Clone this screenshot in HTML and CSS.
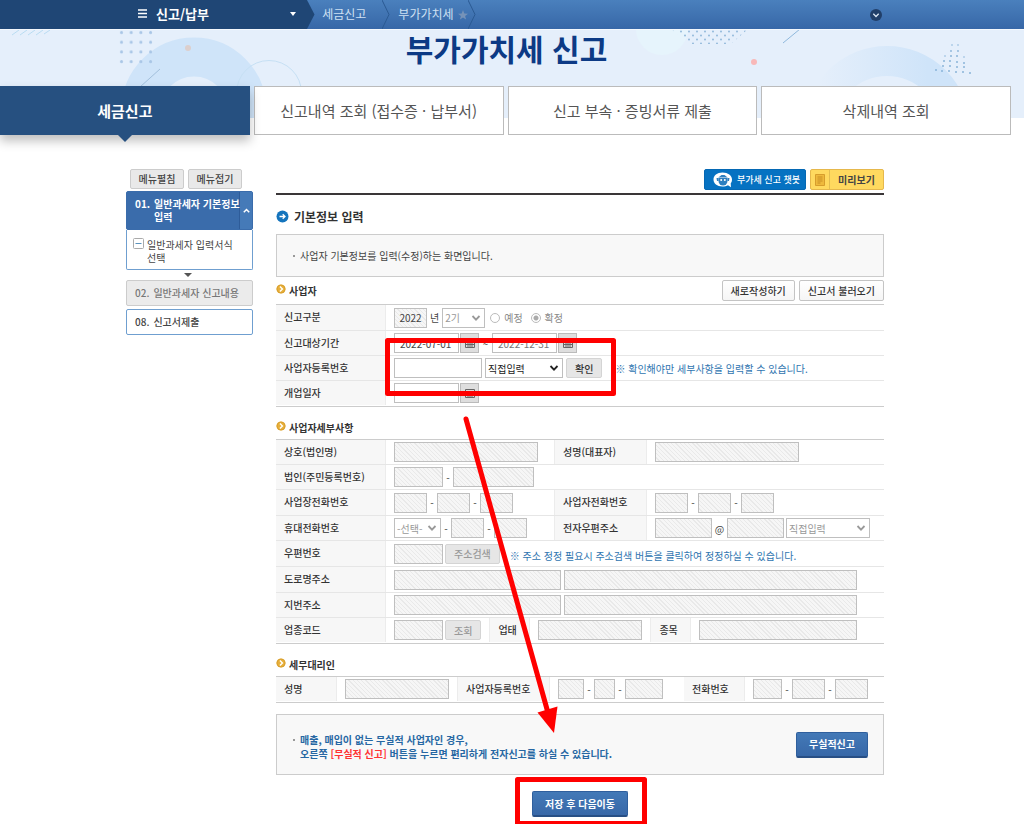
FILE: index.html
```html
<!DOCTYPE html>
<html lang="ko">
<head>
<meta charset="utf-8">
<title>부가가치세 신고</title>
<link rel="stylesheet" href="styles.css">
</head>
<body>
<svg class="defs" aria-hidden="true">
  <symbol id="chev" viewBox="0 0 10 10"><path d="M1.5 3l3.5 3.6L8.5 3" fill="none" stroke="currentColor" stroke-width="1.8"/></symbol>
  <symbol id="cal" viewBox="0 0 12 12"><path d="M1.5 2.5h9v8h-9zM1 4.5h10M4 5v5M6 5v5M8 5v5M2 7.5h8" fill="none" stroke="currentColor"/></symbol>
  <symbol id="gold" viewBox="0 0 10 10"><circle cx="5" cy="5" r="4.6" fill="#e8b03a"/><circle cx="5" cy="5" r="4" fill="none" stroke="#d39a2b" stroke-width=".7"/><path d="M3.9 2.6L6.4 5 3.9 7.4" fill="none" stroke="#fff" stroke-width="1.4"/></symbol>
</svg>
<header class="topbar">
  <button class="menu-main" type="button">
    <svg width="9" height="9" viewBox="0 0 9 9"><path d="M0 1h9M0 4.5h9M0 8h9" stroke="#fff" stroke-width="1.5"/></svg>
    <span>신고/납부</span>
    <svg class="caret" width="6" height="4" viewBox="0 0 6 4"><path d="M0 0h6L3 4z" fill="#fff"/></svg>
  </button>
  <svg class="tip" width="8" height="29" viewBox="0 0 8 29"><path d="M0 0L7.500 14.500 0 29z" fill="#1f4675"/></svg>
  <nav class="crumbs">
    <a href="#">세금신고</a>
    <svg width="8" height="29" viewBox="0 0 8 29"><path d="M0 0l7 14.500L0 29" fill="none" stroke="#2b5a93"/></svg>
    <a href="#">부가가치세</a>
    <svg class="star" width="10" height="10" viewBox="0 0 10 10"><path d="M5 0l1.300 3.500 3.700.200-2.900 2.300 1 3.600L5 7.600 1.900 9.600l1-3.600L0 3.700l3.700-.200z" fill="#7592b8"/></svg>
    <svg width="8" height="29" viewBox="0 0 8 29"><path d="M0 0l7 14.500L0 29" fill="none" stroke="#2b5a93"/></svg>
  </nav>
  <button class="expand" type="button" aria-label="펼치기"><svg width="12" height="12" viewBox="0 0 12 12"><circle cx="6" cy="6" r="6" fill="#213f69"/><path d="M3.300 4.800L6 7.500l2.700-2.700" fill="none" stroke="#dce8f5" stroke-width="1.300"/></svg></button>
</header>
<section class="hero">
  <svg class="hero-art" viewBox="0 29 1024 89" preserveAspectRatio="xMidYMin slice" aria-hidden="true">
    <defs>
      <linearGradient id="fade"><stop offset="0" stop-color="#cfe4f9" stop-opacity="0"/><stop offset=".8" stop-color="#cfe4f9"/></linearGradient>
      <pattern id="dots" x="117" y="27" width="9.700" height="9.700" patternUnits="userSpaceOnUse"><circle cx="4.500" cy="4.500" r="1.500" fill="#a9c6e6"/></pattern>
      <pattern id="tiny" x="671" y="28" width="8" height="8" patternUnits="userSpaceOnUse"><circle cx="2" cy="2.500" r=".9" fill="#8ab4d8"/><circle cx="6" cy="6.500" r=".9" fill="#8ab4d8"/></pattern>
    </defs>
    <path d="M12 34l7-5M20 34l7-5M28 34l7-5M36 34l7-5M44 33l6-4" stroke="#b9dcf2"/>
    <circle cx="194" cy="109" r="53" fill="none" stroke="#cfe4f9" stroke-width="39"/>
    <circle cx="269" cy="92" r="32.500" fill="none" stroke="#c6e0f4"/>
    <rect x="117" y="27" width="38" height="38" fill="url(#dots)"/>
    <circle cx="188" cy="47" r="3" fill="#dccfcd"/>
    <path d="M140 86l20-18" stroke="#a3c0dc"/>
    <circle cx="662" cy="28" r="26" fill="#e6f4fc"/>
    <path d="M671 28h77l-17 15h-40z" fill="url(#tiny)"/>
    <path d="M783 42l17-14" stroke="#8fb8dc"/>
    <circle cx="754" cy="61" r="3" fill="#f8b8b8"/>
    <circle cx="887" cy="128" r="68" fill="none" stroke="url(#fade)" stroke-width="30"/>
    <g fill="#8ab4d8"><circle cx="952" cy="44" r=".8"/><circle cx="958" cy="44" r=".8"/><circle cx="951" cy="50" r=".9"/><circle cx="958" cy="50" r=".9"/><circle cx="945" cy="55" r=".8"/><circle cx="951" cy="55" r="1"/><circle cx="957" cy="55" r="1"/><circle cx="964" cy="56" r=".8"/><circle cx="944" cy="60" r="1"/><circle cx="950" cy="60" r="1"/><circle cx="957" cy="61" r="1"/><circle cx="964" cy="62" r="1"/><circle cx="943" cy="65" r="1"/><circle cx="950" cy="65" r="1"/><circle cx="957" cy="66" r="1"/><circle cx="964" cy="66" r="1"/><circle cx="936" cy="69" r="1"/><circle cx="942" cy="70" r="1"/><circle cx="949" cy="70" r="1"/><circle cx="956" cy="71" r="1"/><circle cx="963" cy="71" r="1"/><circle cx="970" cy="72" r="1"/></g>
  </svg>
  <h1>부가가치세 신고</h1>
</section>
<nav class="tabs">
  <a class="tab active" href="#">세금신고</a>
  <a class="tab" href="#">신고내역 조회 (접수증 · 납부서)</a>
  <a class="tab" href="#">신고 부속 · 증빙서류 제출</a>
  <a class="tab" href="#">삭제내역 조회</a>
</nav>
<div class="page">
  <aside class="side">
    <div class="side-btns"><button type="button">메뉴펼침</button><button type="button">메뉴접기</button></div>
    <div class="step open">
      <a class="step-head" href="#"><span>01.</span><span class="step-name">일반과세자 기본정보 입력</span></a>
      <span class="step-arrow"><svg width="7" height="5" viewBox="0 0 7 5"><path d="M.8 4.300L3.500 1.500l2.700 2.800" fill="none" stroke="#fff" stroke-width="1.500"/></svg></span>
    </div>
    <a class="sub" href="#"><svg width="11" height="11" viewBox="0 0 11 11"><rect x=".5" y=".5" width="10" height="10" rx="1" fill="#fff" stroke="#aaa"/><path d="M2.500 5.500h6" stroke="#5b93bd"/></svg><span>일반과세자 입력서식 선택</span></a>
    <svg class="down" width="8" height="4" viewBox="0 0 8 4"><path d="M0 0h8L4 4z" fill="#555"/></svg>
    <a class="step plain gray" href="#"><span>02.</span><span>일반과세자 신고내용</span></a>
    <a class="step plain" href="#"><span>08.</span><span>신고서제출</span></a>
  </aside>
  <main class="main">
    <div class="actions">
      <button class="chatbot" type="button"><svg width="20" height="16" viewBox="0 0 20 16"><path d="M9.500.500C4 .500.500 3.500.500 7.500s3.500 7 9 7c2 0 4-.400 5.500-1.200l3 2-.300-3.800c.900-1.100 1.300-2.500 1.300-4 0-4-4-7-9.500-7z" fill="#fff"/><path d="M5.500 5.500h9v3.500a4.500 4.500 0 0 1-9 0z" fill="#2d7fc0"/><path d="M3.500 6h2v3h-1.500zM14.500 6h2l-.500 3h-1.500zM6 5l2.500-2h3L14 5" fill="#2d7fc0"/><circle cx="8.200" cy="8" r="1" fill="#fff"/><circle cx="11.800" cy="8" r="1" fill="#fff"/></svg>부가세 신고 챗봇</button>
      <button class="preview" type="button"><span class="preview-icon"><svg width="10" height="12" viewBox="0 0 10 12"><path d="M.5.500h9v11h-9z" fill="#eeb93c" stroke="#d79d2c"/><path d="M2.500 3h5M2.500 5h5M2.500 7h5M2.500 9h3" stroke="#c98e25"/></svg></span><span class="preview-text">미리보기</span></button>
    </div>
    <h2><svg width="13" height="13" viewBox="0 0 13 13"><circle cx="6.500" cy="6.500" r="6" fill="#1474bd"/><path d="M3.500 6.500h5M6.700 4.300l2.300 2.200-2.300 2.200" fill="none" stroke="#fff" stroke-width="1.300"/></svg>기본정보 입력</h2>
    <p class="box intro">사업자 기본정보를 입력(수정)하는 화면입니다.</p>

    <div class="section-bar">
      <h3><svg width="10" height="10"><use href="#gold"/></svg>사업자</h3>
      <div class="bar-btns"><button type="button">새로작성하기</button><button type="button">신고서 불러오기</button></div>
    </div>
    <div class="form">
      <div class="row tall">
        <label class="lab" for="yr">신고구분</label>
        <div class="cell"><input id="yr" class="ro w33 center" value="2022" readonly><span>년</span>
          <span class="sel w43"><select disabled aria-label="기수"><option>2기</option></select><svg width="10" height="10"><use href="#chev"/></svg></span>
          <label class="radio"><input type="radio" name="kind" disabled>예정</label><label class="radio"><input type="radio" name="kind" checked disabled>확정</label></div>
      </div>
      <div class="row">
        <label class="lab" for="d1">신고대상기간</label>
        <div class="cell snug"><input id="d1" class="w65" value="2022-07-01"><button class="cal" type="button" aria-label="시작일"><svg width="12" height="12"><use href="#cal"/></svg></button><span class="tilde">~</span><input class="w65 mute" value="2022-12-31" aria-label="종료일"><button class="cal" type="button" aria-label="종료일 선택"><svg width="12" height="12"><use href="#cal"/></svg></button></div>
      </div>
      <div class="row">
        <label class="lab" for="biz">사업자등록번호</label>
        <div class="cell"><input id="biz" class="w88"><span class="sel w78 on"><select aria-label="입력방식"><option>직접입력</option></select><svg width="10" height="10"><use href="#chev"/></svg></span><button class="btn" type="button">확인</button><span class="note">※ 확인해야만 세부사항을 입력할 수 있습니다.</span></div>
      </div>
      <div class="row">
        <label class="lab" for="open">개업일자</label>
        <div class="cell snug"><input id="open" class="w65 pale"><button class="cal" type="button" aria-label="개업일 선택"><svg width="12" height="12"><use href="#cal"/></svg></button></div>
      </div>
    </div>

    <h3 class="gap-top"><svg width="10" height="10"><use href="#gold"/></svg>사업자세부사항</h3>
    <div class="form">
      <div class="row">
        <label class="lab" for="nm">상호(법인명)</label>
        <div class="cell half"><input id="nm" class="ro w144" readonly></div>
        <label class="lab second" for="ceo">성명(대표자)</label>
        <div class="cell"><input id="ceo" class="ro w144" readonly></div>
      </div>
      <div class="row">
        <label class="lab" for="corp">법인(주민등록번호)</label>
        <div class="cell none"><input id="corp" class="ro w49" readonly><i>-</i><input class="ro w81" readonly aria-label="법인번호 뒷자리"></div>
      </div>
      <div class="row tall">
        <label class="lab" for="t1">사업장전화번호</label>
        <div class="cell half none"><input id="t1" class="ro w33" readonly><i>-</i><input class="ro w33" readonly aria-label="국번"><i>-</i><input class="ro w33" readonly aria-label="번호"></div>
        <label class="lab second" for="t2">사업자전화번호</label>
        <div class="cell none"><input id="t2" class="ro w33" readonly><i>-</i><input class="ro w33" readonly aria-label="국번"><i>-</i><input class="ro w33" readonly aria-label="번호"></div>
      </div>
      <div class="row">
        <label class="lab" for="hp">휴대전화번호</label>
        <div class="cell half none"><span class="sel w47"><select id="hp" disabled><option>-선택-</option></select><svg width="10" height="10"><use href="#chev"/></svg></span><i>-</i><input class="ro w33" readonly aria-label="국번"><i>-</i><input class="ro w33" readonly aria-label="번호"></div>
        <label class="lab second" for="em">전자우편주소</label>
        <div class="cell tight"><input id="em" class="ro w57" readonly><span class="at">@</span><input class="ro w57" readonly aria-label="도메인"><span class="sel w84"><select disabled aria-label="도메인 선택"><option>직접입력</option></select><svg width="10" height="10"><use href="#chev"/></svg></span></div>
      </div>
      <div class="row tall">
        <label class="lab" for="zip">우편번호</label>
        <div class="cell tight"><input id="zip" class="ro w49" readonly><button class="btn off" type="button" disabled>주소검색</button><span class="note low">※ 주소 정정 필요시 주소검색 버튼을 클릭하여 정정하실 수 있습니다.</span></div>
      </div>
      <div class="row tall">
        <label class="lab" for="road">도로명주소</label>
        <div class="cell wide"><input id="road" class="ro w167" readonly><input class="ro grow" readonly aria-label="도로명 상세주소"></div>
      </div>
      <div class="row">
        <label class="lab" for="lot">지번주소</label>
        <div class="cell wide"><input id="lot" class="ro w167" readonly><input class="ro grow" readonly aria-label="지번 상세주소"></div>
      </div>
      <div class="row">
        <label class="lab" for="code">업종코드</label>
        <div class="cell fit tight"><input id="code" class="ro w49" readonly><button class="btn off" type="button" disabled>조회</button></div>
        <label class="lab mini" for="ty">업태</label>
        <div class="cell fit"><input id="ty" class="ro w104" readonly></div>
        <label class="lab mini" for="it">종목</label>
        <div class="cell wide"><input id="it" class="ro grow" readonly></div>
      </div>
    </div>

    <h3 class="gap-top"><svg width="10" height="10"><use href="#gold"/></svg>세무대리인</h3>
    <div class="form">
      <div class="row">
        <label class="lab short" for="ag">성명</label>
        <div class="cell fit"><input id="ag" class="ro w104" readonly></div>
        <label class="lab second" for="ab">사업자등록번호</label>
        <div class="cell none"><input id="ab" class="ro w26" readonly><i>-</i><input class="ro w21" readonly aria-label="가운데 번호"><i>-</i><input class="ro w38" readonly aria-label="끝 번호"></div>
        <label class="lab short" for="at">전화번호</label>
        <div class="cell fit none phone"><input id="at" class="ro w29" readonly><i>-</i><input class="ro w33" readonly aria-label="국번"><i>-</i><input class="ro w33" readonly aria-label="번호"></div>
      </div>
    </div>

    <div class="box tip-box">
      <p>매출, 매입이 없는 무실적 사업자인 경우,<br>오른쪽 <em>[무실적 신고]</em> 버튼을 누르면 편리하게 전자신고를 하실 수 있습니다.</p>
      <button class="primary" type="button">무실적신고</button>
    </div>
    <div class="submit"><button class="primary" type="button">저장 후 다음이동</button></div>

    <svg class="marks" width="608" height="655" viewBox="276 169 608 655" aria-hidden="true">
      <g fill="none" stroke="#f00" stroke-width="5">
        <rect x="387.500" y="340.500" width="226" height="53" stroke-linejoin="round"/>
        <rect x="517.500" y="779.500" width="127" height="44" stroke-linejoin="round"/>
        <path d="M466 419l81.500 292" stroke-linecap="round"/>
      </g>
      <path d="M537.500 712.500l20-6L554 733z" fill="#f00"/>
    </svg>
  </main>
</div>
</body>
</html>
```
FILE: styles.css
```css
* { box-sizing: border-box; }
body {
  margin: 0;
  background: #fff;
  color: #444;
  font: 10px/13px "Noto Sans CJK KR", "Liberation Sans", sans-serif;
}
a { color: inherit; text-decoration: none; }
button, input, select { font: inherit; color: inherit; margin: 0; }
svg { flex: none; display: block; }
h1, h2, h3, p { margin: 0; }
.defs { position: absolute; width: 0; height: 0; }

.topbar {
  display: flex;
  align-items: center;
  height: 29px;
  background: linear-gradient(#4a80bd, #3767a7);
}
.menu-main {
  display: flex;
  align-items: center;
  gap: 9px;
  width: 30%;
  height: 29px;
  padding: 0 11px 2px 138px;
  border: 0;
  background: #1f4675;
  color: #fff;
  font-size: 13px;
  font-weight: 700;
}
.caret { margin-left: auto; }
.crumbs { display: flex; align-items: center; gap: 8px; color: #cfe1f3; font-size: 12px; padding-left: 7px; }
.crumbs a { padding: 0 6px 2px 0; }
.crumbs a + svg { margin-left: 2px; }
.crumbs .star { margin-left: -10px; }
.crumbs .star + svg { margin-left: -8px; }
.expand { margin-left: auto; margin-right: 142px; padding: 0; border: 0; background: none; }

.hero { position: relative; height: 89px; background: #e5effb; border-top: 1px solid #f4f8fd; }
.hero-art { position: absolute; left: 0; top: 0; width: 100%; height: 88px; }
h1 {
  position: relative;
  padding-right: 11px;
  color: #0c3a85;
  font-size: 30px;
  line-height: 36px;
  font-weight: 700;
  text-align: center;
}

.tabs {
  position: relative;
  display: grid;
  grid-template-columns: repeat(4, 1fr);
  gap: 4px;
  margin-top: -32px;
  padding-right: 13px;
}
.tab {
  height: 49px;
  border: 1px solid #bbb;
  background: #fff;
  color: #555;
  font-size: 15px;
  line-height: 47px;
  text-align: center;
}
.tab.active {
  position: relative;
  border-color: #265080;
  background: #265080;
  color: #fff;
  font-weight: 700;
  box-shadow: 0 6px 10px rgba(0, 0, 0, .25);
}
.tab.active::after {
  content: "";
  position: absolute;
  left: 50%;
  top: 100%;
  margin-left: -8px;
  border: 8px solid transparent;
  border-top-color: #265080;
  border-bottom: 0;
}

.page {
  display: flex;
  gap: 23px;
  max-width: 758px;
  margin: 34px auto 0;
  position: relative;
  right: 7px;
}
.side { width: 127px; flex: none; }
.side-btns { display: flex; gap: 4px; padding-left: 4px; margin-bottom: 2px; }
.side-btns button {
  width: 54px;
  height: 20px;
  padding: 0 0 2px;
  border: 1px solid #ccc;
  border-radius: 2px;
  background: #e9e9e9;
  font-weight: 500;
}
.step { display: flex; border: 1px solid #6f9fd0; border-radius: 2px; }
.step.open { background: #3a6cab; color: #fff; font-weight: 700; border-color: #3a6cab; }
.step-head { flex: 1; display: flex; gap: 4px; padding: 5px 0 6px 8px; }
.step-name { width: 87px; white-space: normal; word-break: keep-all; }
.step-arrow { width: 13px; margin-left: -13px; display: grid; place-items: center; background: #457ab8; border-left: 1px solid #2e5c99; }
.step-head { position: relative; }
.sub { display: flex; gap: 3px; padding: 8px 6px 5px; border: 1px solid #6f9fd0; border-top: 0; border-radius: 0 0 2px 2px; }
.sub span { word-break: keep-all; }
.down { margin: 3px auto 3px 58px; }
.plain { height: 26px; gap: 4px; align-items: center; padding: 0 0 1px 8px; margin-bottom: 3px; font-weight: 500; }
.plain.gray { background: #ebebeb; border-color: #ccc; color: #777; }

.main { position: relative; flex: 1; min-width: 0; }
.actions { display: flex; justify-content: flex-end; gap: 4px; height: 26px; border-bottom: 2px solid #3a3638; }
.actions button { display: flex; align-items: center; height: 21px; padding: 0; border-radius: 2px; }
.actions .chatbot { width: 102px; gap: 4px; padding-left: 8px; border: 1px solid #0568b4; background: #0672c2; color: #fff; font-size: 9px; font-weight: 500; white-space: nowrap; }
.actions .preview { width: 74px; border: 1px solid #e6b84c; background: #ffd95f; font-weight: 700; }
.preview-icon { display: grid; place-items: center; width: 19px; height: 19px; border-right: 1px solid #e2bd52; }
.preview-text { flex: 1; }
h2 { display: flex; align-items: center; gap: 5px; height: 39px; padding-top: 4px; color: #333; font-size: 12px; line-height: 16px; }
.box { border: 1px solid #ccc; background: #f8f8f8; }
.intro { height: 43px; padding: 14px 23px; }
.intro::before, .tip-box p::before {
  content: "";
  float: left;
  width: 2px;
  height: 2px;
  margin: 6px 0 0 -7px;
  background: #999;
}
.section-bar { display: flex; justify-content: space-between; align-items: center; height: 27px; }
h3 { display: flex; align-items: center; gap: 3px; color: #333; font-size: 10px; line-height: 14px; }
h3 svg { margin-bottom: 3px; }
.gap-top { height: 33px; padding-top: 10px; }
.bar-btns { display: flex; gap: 4px; }
.bar-btns button { height: 21px; padding: 0 8px; border: 1px solid #c4c4c4; border-radius: 2px; background: linear-gradient(#fff, #f5f5f5); color: #333; font-weight: 500; }

.form { border-top: 1px solid #ccc; border-bottom: 1px solid #ccc; margin-bottom: -1px; }
.row { display: flex; height: 25px; border-bottom: 1px solid #e6e6e6; }
.row:last-child { border-bottom-color: transparent; }
.row.tall { height: 26px; }
.lab { flex: none; width: 110px; padding: 5px 0 0 8px; border-right: 1px solid #ececec; background: #f7f7f7; color: #333; font-weight: 500; }
.lab.second { width: 93px; border-left: 1px solid #ececec; }
.lab.mini { width: 41px; border-left: 1px solid #ececec; }
.lab.short { width: 61px; }
.cell { flex: 1; display: flex; align-items: center; gap: 3px; padding: 0 8px; white-space: nowrap; min-width: 0; }
.cell.half { flex: 0 0 168px; }
.cell.fit { flex: none; }
.cell.none { gap: 0; }
.cell.snug { gap: 1px; }
.cell.tight { gap: 2px; }
.cell.wide { padding-right: 27px; }
.cell.phone { padding-right: 16px; }
.cell i { width: 10px; text-align: center; font-style: normal; }

.cell input:not([type="radio"]), .sel select {
  height: 20px;
  padding: 0 5px;
  border: 1px solid #bfbfbf;
  border-radius: 0;
  background: #fff;
}
.cell input.ro:not([type="radio"]) {
  background: repeating-linear-gradient(45deg, #f6f6f6 0, #f6f6f6 2px, #e9e9e9 2px, #e9e9e9 3px);
}
.cell input.center:not([type="radio"]) { padding: 0; text-align: center; }
.cell input.mute { color: #777; }
.cell input.pale { color: #777; }
.cell input.grow { flex: 1; min-width: 0; }
.sel { display: grid; align-items: center; justify-items: end; color: #999; }
.sel.on { color: #222; }
.sel > * { grid-area: 1 / 1; }
.sel select { width: 100%; padding: 0 2px; appearance: none; opacity: 1; }
.sel svg { margin-right: 4px; pointer-events: none; }
.radio { display: flex; align-items: center; gap: 4px; color: #888; padding: 0 3px 0 2px; }
.radio input {
  appearance: none;
  width: 10px;
  height: 10px;
  border: 1px solid #bbb;
  border-radius: 50%;
  background: #fff;
}
.radio input:checked { background: radial-gradient(#aaa 0 2px, #fff 3px); }
.btn { height: 20px; padding: 0 8px; border: 1px solid #d4d4d4; border-radius: 2px; background: #e6e6e6; color: #333; font-weight: 500; }
.btn.off { color: #999; }
.cal { display: grid; place-items: center; width: 19px; height: 20px; padding: 0; border: 1px solid #bbb; background: #dedede; color: #666; }
.tilde { width: 11px; text-align: center; }
.at { width: 11px; text-align: center; }
.note { color: #2f75b0; padding-left: 10px; }
.note.low { padding: 3px 0 0 8px; }

.w21 { width: 21px; } .w26 { width: 26px; } .w29 { width: 29px; } .w33 { width: 33px; }
.w38 { width: 38px; } .w43 { width: 43px; } .w47 { width: 47px; } .w49 { width: 49px; }
.w57 { width: 57px; } .w65 { width: 65px; } .w78 { width: 78px; } .w81 { width: 81px; }
.w84 { width: 84px; } .w88 { width: 88px; } .w104 { width: 104px; } .w144 { width: 144px; }
.w167 { width: 167px; }

.tip-box { display: flex; align-items: center; justify-content: space-between; height: 61px; margin-top: 12px; padding: 0 15px 0 23px; color: #2667a3; font-weight: 700; line-height: 14px; }
.tip-box p { padding-top: 4px; }
.tip-box em { color: #f33; font-style: normal; }
.primary { height: 26px; padding: 0 12px; border: 1px solid #2f5f9d; border-bottom: 2px solid #284f85; border-radius: 2px; background: linear-gradient(#4379b7, #3868a8); color: #fff; font-weight: 700; }
.submit { display: flex; justify-content: center; padding: 16px 0 7px; }
.marks { position: absolute; left: 0; top: 0; pointer-events: none; }
```
